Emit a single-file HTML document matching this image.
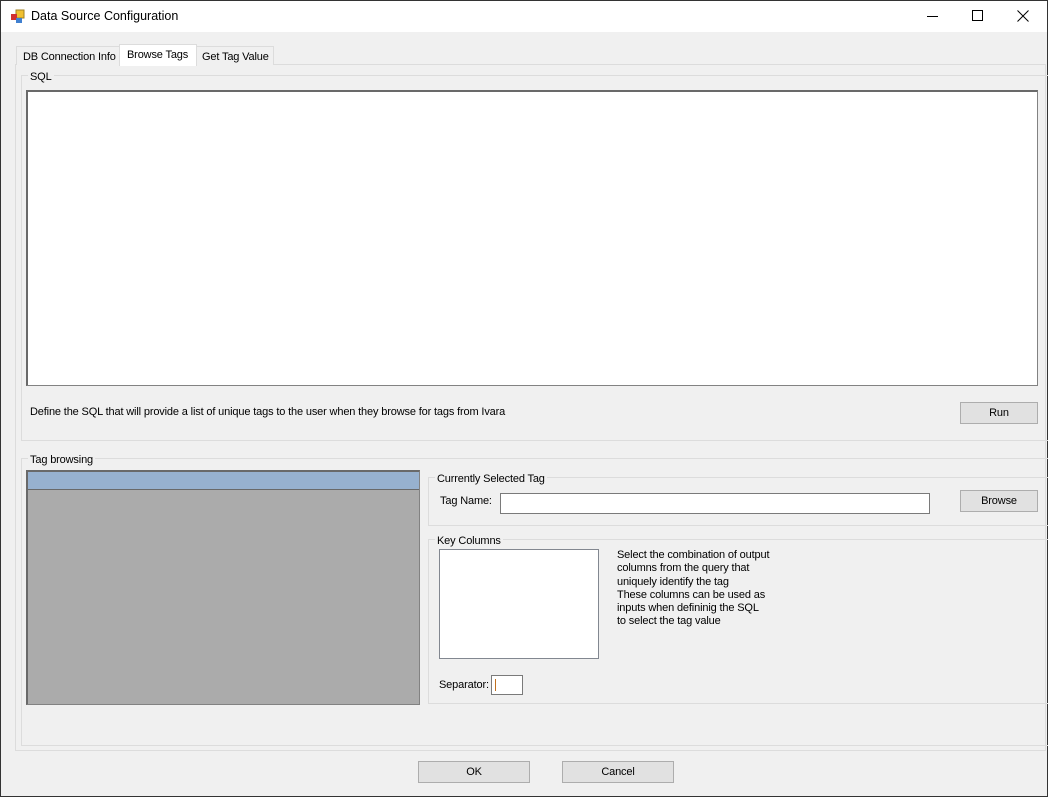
<!DOCTYPE html>
<html><head><style>
*{box-sizing:border-box;margin:0;padding:0}
body{width:1048px;height:797px;overflow:hidden;background:#f0f0f0;font-family:"Liberation Sans",sans-serif;font-size:11px;letter-spacing:-0.15px;color:#000;position:relative;white-space:nowrap}
.a{position:absolute}
.win{left:0;top:0;width:1048px;height:797px;border:1px solid #333}
.gb{position:absolute;border:1px solid #dcdcdc}
.gl{position:absolute;background:#f0f0f0;padding:0 2px;top:-5px;left:6px}
.btn{position:absolute;background:#e1e1e1;border:1px solid #adadad;text-align:center}
.inp{position:absolute;background:#fff;border:1px solid #7a7a7a}
</style></head><body>
<div class="a win"></div>
<div class="a" style="left:1px;top:1px;width:1046px;height:31px;background:#fff"></div>
<svg class="a" style="left:10px;top:9px" width="16" height="16"><rect x="6" y="1" width="8" height="8" fill="#f0c030" stroke="#a08020"/><rect x="1" y="5" width="6" height="6" fill="#d03030"/><rect x="6" y="9" width="6" height="5" fill="#4080d0"/></svg>
<div class="a" style="left:31px;top:9px;font-size:12.5px;letter-spacing:0">Data Source Configuration</div>
<div class="a" style="left:927px;top:16px;width:11px;height:1px;background:#000"></div>
<div class="a" style="left:972px;top:10px;width:11px;height:11px;border:1px solid #000"></div>
<svg class="a" style="left:1017px;top:10px" width="12" height="12"><path d="M0.5 0.5L11.5 11.5M11.5 0.5L0.5 11.5" stroke="#000"/></svg>
<div class="a" style="left:15px;top:64px;width:1031px;height:687px;border:1px solid #dcdcdc;background:#f0f0f0"></div>
<div class="a" style="left:16px;top:46px;width:104px;height:19px;border:1px solid #dcdcdc;border-bottom:none;background:#f0f0f0;padding:4px 0 0 6px">DB Connection Info</div>
<div class="a" style="left:196px;top:46px;width:78px;height:19px;border:1px solid #dcdcdc;border-bottom:none;background:#f0f0f0;padding:4px 0 0 5px">Get Tag Value</div>
<div class="a" style="left:119px;top:44px;width:78px;height:22px;border:1px solid #dcdcdc;border-bottom:none;background:#fff;padding:4px 0 0 7px">Browse Tags</div>
<div class="gb" style="left:21px;top:75px;width:1030px;height:366px"><div class="gl">SQL</div></div>
<div class="a" style="left:26px;top:90px;width:1012px;height:296px;background:#fff;border:1px solid #828282;border-top:2px solid #696969;border-left:2px solid #696969"></div>
<div class="a" style="left:30px;top:406px">Define the SQL that will provide a list of unique tags to the user when they browse for tags from Ivara</div>
<div class="btn" style="left:960px;top:402px;width:78px;height:22px;padding-top:4px">Run</div>
<div class="gb" style="left:21px;top:458px;width:1030px;height:288px"><div class="gl">Tag browsing</div></div>
<div class="a" style="left:26px;top:470px;width:394px;height:235px;background:#ababab;border:1px solid #828282;border-top:2px solid #696969;border-left:2px solid #696969"></div>
<div class="a" style="left:28px;top:472px;width:391px;height:18px;background:#97b1cf;border-bottom:1px solid #696969"></div>
<div class="gb" style="left:428px;top:477px;width:622px;height:49px"><div class="gl">Currently Selected Tag</div></div>
<div class="a" style="left:440px;top:495px">Tag Name:</div>
<div class="inp" style="left:500px;top:493px;width:430px;height:21px"></div>
<div class="btn" style="left:960px;top:490px;width:78px;height:22px;padding-top:4px">Browse</div>
<div class="gb" style="left:428px;top:539px;width:622px;height:165px"><div class="gl">Key Columns</div></div>
<div class="inp" style="left:439px;top:549px;width:160px;height:110px;border-color:#828790"></div>
<div class="a" style="left:617px;top:549px;line-height:13.3px">Select the combination of output<br>columns from the query that<br>uniquely identify the tag<br>These columns can be used as<br>inputs when defininig the SQL<br>to select the tag value</div>
<div class="a" style="left:439px;top:679px">Separator:</div>
<div class="inp" style="left:491px;top:675px;width:32px;height:20px"></div>
<div class="a" style="left:495px;top:679px;width:1px;height:12px;background:#c07020"></div>
<div class="btn" style="left:418px;top:761px;width:112px;height:22px;padding-top:4px">OK</div>
<div class="btn" style="left:562px;top:761px;width:112px;height:22px;padding-top:4px">Cancel</div>
</body></html>
